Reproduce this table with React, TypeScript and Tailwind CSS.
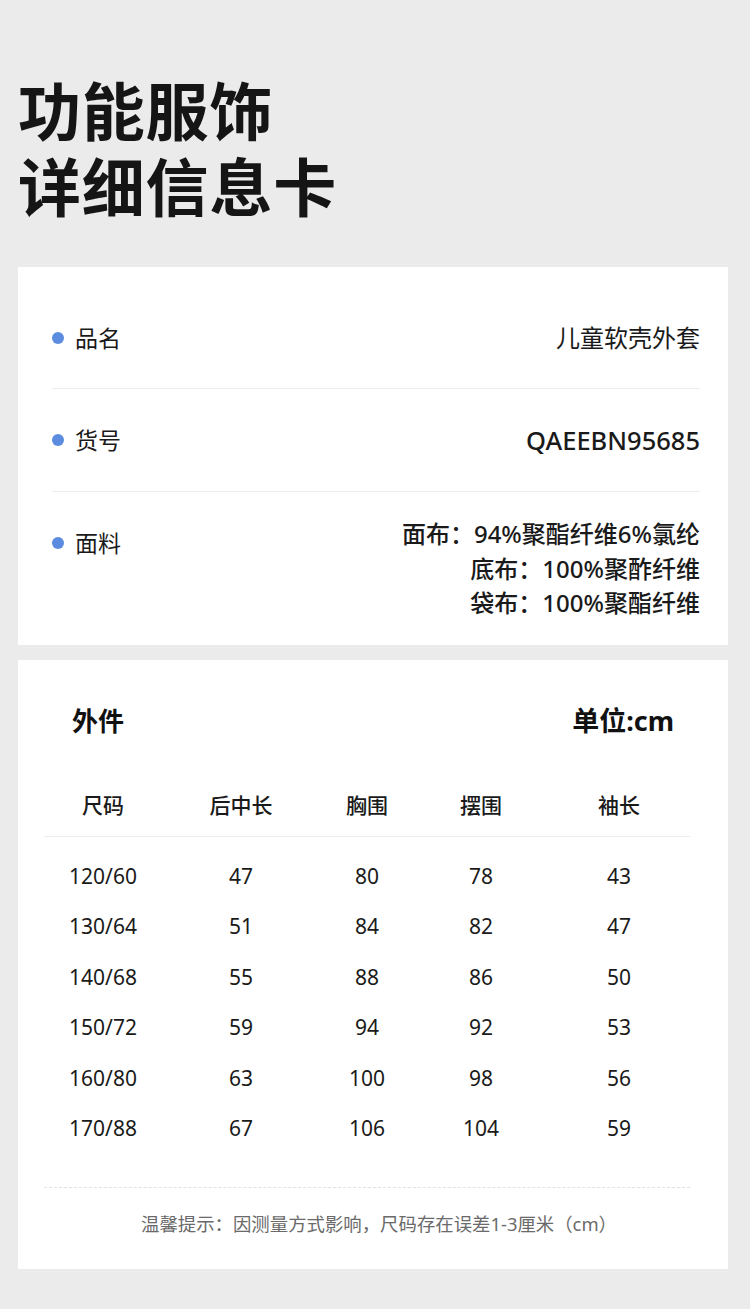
const sizes = [
  ['120/60', '47', '80', '78', '43'],
  ['130/64', '51', '84', '82', '47'],
  ['140/68', '55', '88', '86', '50'],
  ['150/72', '59', '94', '92', '53'],
  ['160/80', '63', '100', '98', '56'],
  ['170/88', '67', '106', '104', '59'],
];

const headers = ['尺码', '后中长', '胸围', '摆围', '袖长'];
const colClass = 'grid grid-cols-[118px_158px_94px_134px_142px]';

function Label({ text }: { text: string }) {
  return (
    <div className="flex items-center gap-[11px]">
      <span className="w-[12px] h-[12px] rounded-full bg-[#5b8ce0]" />
      <span className="text-[23px] leading-[30px] text-[#1a1a1a]">{text}</span>
    </div>
  );
}

export default function App() {
  return (
    <div
      className="w-[750px] min-h-[1309px] bg-[#ebebeb] pb-[39px]"
      style={{ fontFamily: '"Noto Sans", "Noto Sans CJK SC", sans-serif' }}
    >
      <div className="pl-[18px] pt-[70px] pb-[3px] text-[63px] leading-[76px] font-bold text-[#151515] tracking-[0.8px]" style={{ fontFamily: '"Noto Sans CJK SC", sans-serif' }}>
        <h1 className="h-[76px]">功能服饰</h1>
        <h1 className="h-[76px]">详细信息卡</h1>
      </div>

      <div className="ml-[18px] mt-[42px] w-[710px] bg-white pl-[34px] pr-[28px] pt-[20px] pb-[24px]">
        <div className="h-[102px] flex items-center justify-between border-b border-[#ececec]">
          <Label text="品名" />
          <span className="text-[24px] text-[#1a1a1a]">儿童软壳外套</span>
        </div>
        <div className="h-[103px] flex items-center justify-between border-b border-[#ececec]">
          <Label text="货号" />
          <span className="text-[25.5px] text-[#1a1a1a] font-medium">QAEEBN95685</span>
        </div>
        <div className="flex items-start justify-between pt-[25px]">
          <div className="mt-[11px]">
            <Label text="面料" />
          </div>
          <div className="text-right text-[24px] leading-[34.5px] text-[#1a1a1a] font-medium">
            <div>面布：94%聚酯纤维6%氯纶</div>
            <div>底布：100%聚酢纤维</div>
            <div>袋布：100%聚酯纤维</div>
          </div>
        </div>
      </div>

      <div className="ml-[18px] mt-[15px] w-[710px] bg-white pl-[26px] pr-[38px] pt-[42px] pb-[32px]">
        <div className="h-[40px] flex items-center justify-between pl-[28px] pr-[16px]">
          <span className="text-[26px] font-bold text-[#111]">外件</span>
          <span className="text-[27px] font-bold text-[#111]">单位:cm</span>
        </div>

        <div className={`${colClass} pt-[48px] pb-[16px] border-b border-[#ececec] text-[21px] leading-[30px] text-[#1a1a1a] text-center font-medium`}>
          {headers.map(h => (
            <div key={h}>{h}</div>
          ))}
        </div>

        <div className="pt-[15px]">
          {sizes.map(row => (
            <div key={row[0]} className={`${colClass} h-[50.4px] items-center text-center text-[21px] text-[#1a1a1a] font-normal`}>
              {row.map((v, i) => (
                <div key={i}>{v}</div>
              ))}
            </div>
          ))}
        </div>

        <div className="mt-[33px] border-t border-dashed border-[#e2e2e2]" />

        <p className="pt-[23px] -mr-[24px] text-center text-[18.4px] leading-[26px] text-[#6a6a6a]">
          温馨提示：因测量方式影响，尺码存在误差1-3厘米（cm）
        </p>
      </div>
    </div>
  );
}
